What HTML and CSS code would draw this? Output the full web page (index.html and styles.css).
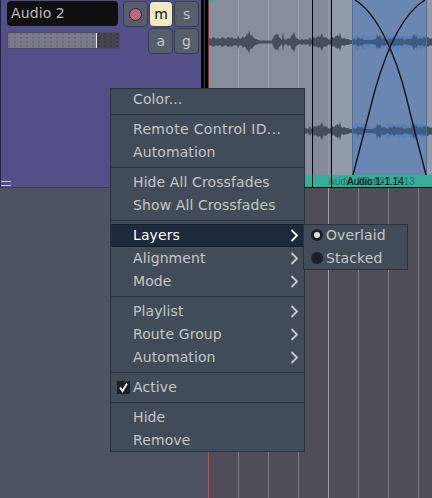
FILE: index.html
```html
<!DOCTYPE html>
<html lang="en">
<head>
    <meta charset="UTF-8">
    <title>Track context menu</title>
    <link rel="stylesheet" href="styles.css">
</head>
<body>
<div class="editor">
    <div class="track-row">
        <div class="track-header">
            <div class="name-row">
                <div class="track-name">Audio 2</div>
                <div class="btn"><span class="rec-dot"></span></div>
                <div class="btn btn-on">m</div>
                <div class="btn">s</div>
            </div>
            <div class="fader-row">
                <div class="fader"><div class="fader-fill"></div></div>
                <div class="btn">a</div>
                <div class="btn">g</div>
            </div>
            <div class="drag-handle"><span></span><span></span></div>
        </div>
        <div class="strip"></div>
        <svg class="canvas" width="223" height="188" viewBox="209 0 223 188">
            <defs>
                <polygon id="wave" points="209,0 209,-4 211,-3 213,-5 215,-4 216,-3 218,-4 220,-3 222,-5 224,-4 226,-3 228,-5 230,-4 232,-5 234,-3 236,-4 237,-3 238,-7 239,-4 241,-3 243,-6 244,-4 246,-6 247,-9 248,-7 249,-12 250,-8 251,-6 252,-7 254,-4 256,-3 258,-2 260,-1.5 272,-1.5 273,-4 274,-6 276,-8 277,-7 278,-9 279,-5 281,-3 282,-2 283,-10 284,-3 286,-2 288,-4 290,-3 291,-6 293,-8 294,-10 295,-7 296,-4 298,-3 300,-2 302,-3 304,-2 306,-3 308,-2 310,-5 311,-3 312,-2 314,-5 316,-4 318,-6 320,-5 321,-7 322,-9 323,-6 324,-4 326,-5 328,-3 330,-2 332,-5 334,-4 336,-6 338,-7 339,-5 340,-10 341,-5 342,-3 344,-4 346,-3 348,-3 350,-2 352,-2 354,-3 356,-2 358,-5 360,-3 362,-4 364,-2 368,-2 372,-2 376,-3 377,-8 378,-5 380,-7 382,-3 384,-4 386,-3 388,-2 390,-4 392,-3 394,-5 396,-3 398,-4 400,-3 402,-4 404,-2 408,-3 410,-3 412,-4 414,-8 415,-5 416,-6 418,-3 420,-4 422,-3 424,-5 426,-4 428,-5 430,-3 432,-4 432,0"/>
                <polygon id="ghost" points="352,0 352,-3 355,-6 358,-9 360,-4 362,-7 364,-8 366,-4 368,-6 370,-3 376,-4 382,-6 385,-4 388,-9 390,-5 393,-7 396,-5 398,-9 401,-5 404,-7 407,-5 410,-6 413,-7 416,-10 419,-6 422,-7 426,-5 426,0"/>
                <g id="wave-both">
                    <use href="#ghost" class="wave-ghost"/>
                    <use href="#ghost" class="wave-ghost" transform="scale(1,-1)"/>
                    <use href="#wave" class="wave-fill"/>
                    <use href="#wave" class="wave-fill" transform="scale(1,-1)"/>
                </g>
            </defs>
            <rect class="region" x="209" y="0" width="103" height="175"/>
            <rect class="region-dark" x="312" y="0" width="19" height="175"/>
            <rect class="region-light" x="331" y="0" width="101" height="175"/>
            <path class="grid" d="M238.5 0V175M268.5 0V175M298.5 0V175M328.5 0V175"/>
            <rect class="marker" x="209" y="0" width="5" height="3"/>
            <use href="#wave-both" transform="translate(0,42)"/>
            <use href="#wave-both" transform="translate(0,131)"/>
            <rect class="xfade" x="352" y="0" width="74" height="175"/>
            <path class="xfade-edge" d="M352.5 0V175M426.5 0V175"/>
            <path class="curve" d="M355 0C375 12 395 50 407 100S420 150 426 175"/>
            <path class="curve" d="M353 175L375 90C385 55 400 15 425 0"/>
            <rect class="name-bar" x="209" y="175" width="223" height="12"/>
            <text class="label-ghost" x="328" y="185">Audio 1-1.12</text>
            <text class="label-ghost" x="358" y="185">Audio 1-1.13</text>
            <text class="label" x="347" y="185">Audio 1-1.14</text>
            <path class="edge" d="M312.5 0V187M331.5 0V187"/>
            <rect class="edge-bottom" x="209" y="187" width="223" height="1"/>
        </svg>
    </div>
    <div class="lower">
        <div class="lower-left"></div>
        <div class="lower-grid"></div>
    </div>

    <!-- context menu -->
    <div class="menu">
        <div class="item first">Color...</div>
        <div class="sep"></div>
        <div class="item wide">Remote Control ID...</div>
        <div class="item">Automation</div>
        <div class="sep"></div>
        <div class="item">Hide All Crossfades</div>
        <div class="item">Show All Crossfades</div>
        <div class="sep"></div>
        <div class="item active">Layers <svg class="arrow" width="9" height="13" viewBox="0 0 9 13"><path d="M1.5 1L7 6.5L1.5 12"/></svg></div>
        <div class="item">Alignment <svg class="arrow" width="9" height="13" viewBox="0 0 9 13"><path d="M1.5 1L7 6.5L1.5 12"/></svg></div>
        <div class="item">Mode <svg class="arrow" width="9" height="13" viewBox="0 0 9 13"><path d="M1.5 1L7 6.5L1.5 12"/></svg></div>
        <div class="sep"></div>
        <div class="item">Playlist <svg class="arrow" width="9" height="13" viewBox="0 0 9 13"><path d="M1.5 1L7 6.5L1.5 12"/></svg></div>
        <div class="item">Route Group <svg class="arrow" width="9" height="13" viewBox="0 0 9 13"><path d="M1.5 1L7 6.5L1.5 12"/></svg></div>
        <div class="item">Automation <svg class="arrow" width="9" height="13" viewBox="0 0 9 13"><path d="M1.5 1L7 6.5L1.5 12"/></svg></div>
        <div class="sep"></div>
        <div class="item">
            <span class="check"><svg width="13" height="13" viewBox="0 0 13 13"><path d="M3 6.5L5.5 10L10 2.5"/></svg></span>
            Active
        </div>
        <div class="sep"></div>
        <div class="item">Hide</div>
        <div class="item last">Remove</div>
    </div>

    <div class="submenu">
        <div class="sub-item"><span class="radio radio-on"></span>Overlaid</div>
        <div class="sub-item"><span class="radio"></span>Stacked</div>
    </div>
</div>
</body>
</html>
```

FILE: styles.css
```css
html, body {
    margin: 0;
    padding: 0;
}
body {
    font-family: "DejaVu Sans", sans-serif;
    font-size: 14px;
    letter-spacing: 0.1px;
    background: #4f4e58;
    overflow: hidden;
}
.editor {
    position: relative;
    width: 432px;
    height: 498px;
    overflow: hidden;
}
.track-row {
    display: flex;
    height: 188px;
}
.track-header {
    position: relative;
    box-sizing: border-box;
    width: 201px;
    padding: 1px 2px 0 6px;
    background: #534f88;
    border-bottom: 1px solid #3c3a5e;
    border-left: 1px solid #23233a;
}
.name-row, .fader-row {
    display: flex;
    gap: 1px;
}
.name-row {
    height: 26px;
}
.fader-row {
    height: 26px;
    margin-top: 1px;
}
.track-name {
    box-sizing: border-box;
    width: 113px;
    height: 25px;
    margin-right: 4px;
    padding-left: 4px;
    line-height: 25px;
    font-size: 14px;
    color: #bdbdbd;
    background: #101012;
    border-radius: 4px;
}
.btn {
    box-sizing: border-box;
    display: flex;
    align-items: center;
    justify-content: center;
    width: 25px;
    height: 26px;
    font-size: 14px;
    color: #c4c8cc;
    background: #565e6c;
    border: 1px solid #383e4c;
    border-radius: 4px;
}
.btn-on {
    color: #111;
    background: #efebc6;
}
.rec-dot {
    box-sizing: border-box;
    width: 13px;
    height: 13px;
    background: #c0667a;
    border: 1px solid #2a2a34;
    border-radius: 50%;
}
.fader-row .btn:nth-child(2) {
    margin-left: 27px;
}
.fader {
    box-sizing: border-box;
    width: 114px;
    height: 17px;
    margin-top: 4px;
    background-color: #45444f;
    background-image: radial-gradient(circle at 1px 1px, #38383f 1px, transparent 1px);
    background-size: 6px 4px;
    border: 1px solid #4a4a66;
}
.fader-fill {
    box-sizing: border-box;
    width: 89px;
    height: 15px;
    background-color: #7c7b89;
    background-image: radial-gradient(circle at 1px 1px, #6c6c7a 1px, transparent 1px);
    background-size: 6px 4px;
    border-right: 1px solid #e8e8e8;
}
.drag-handle {
    position: absolute;
    left: 0;
    top: 181px;
    display: flex;
    flex-direction: column;
    gap: 3px;
}
.drag-handle span {
    display: block;
    width: 10px;
    height: 1px;
    background: #c8c8d0;
}
.strip {
    box-sizing: border-box;
    width: 8px;
    border-left: 3px solid #000;
    border-bottom: 1px solid #000;
    background-color: #000;
    background-image: linear-gradient(to right, #3a4254 1px, #000 1px);
    box-shadow: inset -1px 0 0 #c8102a;
}
.canvas {
    display: block;
    flex: none;
}

/* canvas parts */
.region { fill: #868e9b; }
.region-dark { fill: #848c99; }
.region-light { fill: #939ba8; }
.grid { stroke: #97a0ac; stroke-width: 1; fill: none; }
.marker { fill: #35ad98; }
.wave-fill { fill: #464e5a; }
.wave-ghost { fill: #7b8fae; }
.xfade { fill: rgba(51, 108, 191, 0.43); }
.xfade-edge { stroke: #4d6d9c; stroke-width: 1; fill: none; }
.curve { stroke: #10131a; stroke-width: 1.4; fill: none; }
.name-bar { fill: #35ad98; }
.label { font-family: "Liberation Sans", sans-serif; font-size: 10px; letter-spacing: 0; fill: #050a0a; }
.label-ghost { font-family: "Liberation Sans", sans-serif; font-size: 10px; letter-spacing: 0; fill: #1f7a6a; }
.edge { stroke: #050505; stroke-width: 1; fill: none; }
.edge-bottom { fill: #050505; }

.lower {
    display: flex;
    height: 310px;
}
.lower-left {
    width: 208px;
    background: #4d5362;
}
.lower-grid {
    flex: 1;
    background-color: #4f4e58;
    background-image:
        linear-gradient(to right, #a0a0a8 1px, transparent 1px),
        linear-gradient(to right, #e04048 1px, transparent 1px),
        linear-gradient(to right, #7d7d85 1px, transparent 1px);
    background-repeat: no-repeat, no-repeat, repeat-x;
    background-size: 1px 100%, 1px 100%, 30px 100%;
    background-position: 120px 0, 0 0, 0 0;
}

/* menus */
.menu {
    position: absolute;
    left: 110px;
    top: 88px;
    box-sizing: border-box;
    width: 195px;
    background: #424c58;
    border: 1px solid #2a323c;
    color: #c4c6c8;
}
.item {
    position: relative;
    box-sizing: border-box;
    height: 23px;
    padding-left: 22px;
    line-height: 22px;
    white-space: nowrap;
}
.item.wide {
    letter-spacing: 0.32px;
}
.item.first, .item.last {
    height: 22px;
}
.item.first {
    line-height: 20px;
}
.item.active {
    color: #fff;
    background: #1d2a3b;
    border-top: 1px solid #151d28;
    border-bottom: 1px solid #151d28;
    line-height: 20px;
    margin: 0 -1px 0 0;
}
.sep {
    box-sizing: border-box;
    height: 7px;
    padding-top: 3px;
}
.sep::after {
    content: "";
    display: block;
    height: 1px;
    background: #2a323c;
}
.arrow {
    position: absolute;
    right: 5px;
    top: 5px;
}
.arrow path {
    fill: none;
    stroke: #c8cacc;
    stroke-width: 1.8;
}
.active .arrow path {
    stroke: #fff;
}
.active .arrow {
    top: 4px;
    right: 6px;
}
.check {
    position: absolute;
    left: 6px;
    top: 5px;
    width: 13px;
    height: 13px;
    background: #1c2027;
}
.check svg {
    display: block;
}
.check path {
    fill: none;
    stroke: #fff;
    stroke-width: 1.8;
}
.submenu {
    position: absolute;
    left: 303px;
    top: 224px;
    box-sizing: border-box;
    width: 105px;
    height: 46px;
    background: #424c58;
    border: 1px solid #2a323c;
    color: #c4c6c8;
}
.sub-item {
    box-sizing: border-box;
    display: flex;
    align-items: center;
    gap: 3px;
    height: 23px;
    padding: 0 0 2px 7px;
}
.sub-item:first-child {
    margin-top: -1px;
}
.radio {
    box-sizing: border-box;
    display: flex;
    align-items: center;
    justify-content: center;
    width: 12px;
    height: 12px;
    background: #1c2027;
    border-radius: 50%;
}
.radio-on::after {
    content: "";
    width: 6px;
    height: 6px;
    background: #e0e0e0;
    border-radius: 50%;
}
```
